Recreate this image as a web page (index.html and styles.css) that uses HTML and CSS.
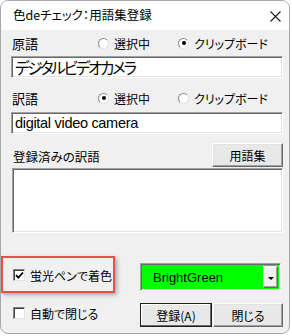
FILE: index.html
```html
<!DOCTYPE html>
<html lang="ja">

<head>
    <meta charset="UTF-8">
    <title>色deチェック：用語集登録</title>
    <link rel="stylesheet" href="styles.css">
</head>

<body>
    <div class="window">
        <div class="titlebar">
            <span class="title">色deチェック：用語集登録</span>
            <svg class="close" width="11" height="11" viewBox="0 0 11 11">
                <path d="M0.5 0.5 L10.5 10.5 M10.5 0.5 L0.5 10.5" stroke="#1a1a1a" stroke-width="1.1" fill="none"/>
            </svg>
        </div>

        <div class="content">
            <!-- 原語 -->
            <div class="row">
                <span class="label">原語</span>
                <span class="radio"><span class="dot"></span>選択中</span>
                <span class="radio checked"><span class="dot"></span>クリップボード</span>
            </div>
            <div class="textbox big">デジタルビデオカメラ</div>

            <!-- 訳語 -->
            <div class="row row-2">
                <span class="label">訳語</span>
                <span class="radio checked"><span class="dot"></span>選択中</span>
                <span class="radio"><span class="dot"></span>クリップボード</span>
            </div>
            <div class="textbox latin">digital video camera</div>

            <!-- 登録済みの訳語 -->
            <div class="list-head">
                <span class="label small">登録済みの訳語</span>
                <span class="button glossary">用語集</span>
            </div>
            <div class="listbox"></div>

            <!-- bottom controls -->
            <div class="bottom">
                <span class="check checked">
                    <span class="box">
                        <svg width="9" height="9" viewBox="0 0 9 9">
                            <path d="M1 4.2 L3.3 6.6 L8 1.5" stroke="#000" stroke-width="1.8" fill="none"/>
                        </svg>
                    </span>蛍光ペンで着色
                </span>
                <div class="combo">
                    <span class="combo-text">BrightGreen</span>
                    <span class="combo-arrow"></span>
                </div>
                <span class="check"><span class="box"></span>自動で閉じる</span>
                <div class="buttons">
                    <span class="button default">登録(A)</span>
                    <span class="button">閉じる</span>
                </div>
            </div>
        </div>

        <div class="highlight"></div>
    </div>
</body>

</html>
```

FILE: styles.css
```css
/* Page */
body {
    margin: 0;
    background: #ffffff;
    font-family: "Noto Sans CJK JP", sans-serif;
    font-feature-settings: "palt";
    color: #000;
}

/* Window frame */
.window {
    position: relative;
    box-sizing: border-box;
    width: 290px;
    height: 334px;
    border: 1px solid #a8a8a8;
    border-radius: 8px;
    background: #f0f0f0;
    overflow: hidden;
}

.titlebar {
    height: 29px;
    background: #ffffff;
    display: flex;
    align-items: center;
    justify-content: space-between;
    padding: 0 8px 0 12px;
}

.title {
    font-size: 12.5px;
    line-height: 1;
}

.close {
    margin-top: 2px;
}

/* Content */
.content {
    padding: 3px 6px 0 10px;
    display: flex;
    flex-direction: column;
}

.row {
    display: grid;
    grid-template-columns: 87px 80px 1fr;
    align-items: center;
    height: 20px;
}

.row-2 {
    margin-top: 10px;
}

.label {
    font-size: 13px;
    padding-left: 1px;
}

.label.small {
    font-size: 12.5px;
}

/* Radio buttons */
.radio {
    display: flex;
    align-items: center;
    gap: 5px;
    font-size: 12px;
}

.dot {
    position: relative;
    box-sizing: border-box;
    width: 11px;
    height: 11px;
    border-radius: 50%;
    background: #ffffff;
    border: 1px solid;
    border-color: #8a8a8a #e2e2e2 #e2e2e2 #8a8a8a;
}

.radio.checked .dot::after {
    content: "";
    position: absolute;
    left: 2.5px;
    top: 2.5px;
    width: 4px;
    height: 4px;
    border-radius: 50%;
    background: #000;
}

/* Sunken boxes */
.textbox,
.listbox {
    box-sizing: border-box;
    background: #ffffff;
    border: 1px solid;
    border-color: #a0a0a0 #ffffff #ffffff #a0a0a0;
    box-shadow: inset 1px 1px 0 #696969, inset -1px -1px 0 #e3e3e3;
}

.textbox {
    height: 22px;
    margin-top: 3px;
    padding: 0 3px;
    display: flex;
    align-items: center;
    white-space: nowrap;
}

.textbox.big {
    font-size: 15.5px;
    letter-spacing: -2.2px;
}

.textbox.latin {
    margin-top: 4px;
    font-family: "Liberation Sans", sans-serif;
    font-size: 14.5px;
    letter-spacing: -0.3px;
}

.list-head {
    margin-top: 9px;
    height: 24px;
    display: flex;
    justify-content: space-between;
    align-items: flex-end;
}

.list-head .label {
    padding-left: 2px;
    margin-bottom: 1px;
}

.listbox {
    margin: 1px 0 0 1px;
    height: 65px;
}

/* Buttons */
.button {
    box-sizing: border-box;
    display: flex;
    align-items: center;
    justify-content: center;
    font-size: 12px;
    background: #e8e8e8;
    border: 1px solid;
    border-color: #ffffff #696969 #696969 #ffffff;
    box-shadow: inset -1px -1px 0 #a0a0a0, inset 1px 1px 0 #e3e3e3;
}

.glossary {
    width: 71px;
    height: 24px;
}

.button.default {
    border-color: #1e1e1e;
    box-shadow: inset -1px -1px 0 #696969, inset 1px 1px 0 #ffffff;
}

/* Bottom section */
.bottom {
    margin-top: 30px;
    display: grid;
    grid-template-columns: 129px 1fr;
    grid-template-rows: 28px 24px;
    row-gap: 12px;
    align-items: center;
}

.check {
    display: flex;
    align-items: center;
    gap: 5px;
    font-size: 12px;
    padding-left: 2px;
    margin-top: -4px;
}

.box {
    box-sizing: border-box;
    width: 12px;
    height: 12px;
    background: #ffffff;
    border: 1px solid;
    border-color: #808080 #e3e3e3 #e3e3e3 #808080;
    box-shadow: inset 1px 1px 0 #404040;
    display: flex;
    align-items: center;
    justify-content: center;
}

.combo {
    box-sizing: border-box;
    width: 141px;
    height: 28px;
    display: flex;
    background: #00ff00;
    border: 1px solid;
    border-color: #a0a0a0 #ffffff #ffffff #a0a0a0;
    box-shadow: inset 1px 1px 0 #696969, inset -1px -1px 0 #e3e3e3;
    padding: 2px 2px 2px 0;
}

.combo-text {
    flex: 1;
    padding-left: 12px;
    font-family: "Liberation Sans", sans-serif;
    font-size: 13px;
    display: flex;
    align-items: center;
}

.combo-arrow {
    position: relative;
    box-sizing: border-box;
    width: 15px;
    background: #f0f0f0;
    border: 1px solid;
    border-color: #f0f0f0 #696969 #696969 #f0f0f0;
    box-shadow: inset -1px -1px 0 #a0a0a0, inset 1px 1px 0 #ffffff;
}

.combo-arrow::after {
    content: "";
    position: absolute;
    left: 4px;
    top: 10px;
    border-left: 3px solid transparent;
    border-right: 3px solid transparent;
    border-top: 3px solid #000;
}

.buttons {
    display: grid;
    grid-template-columns: 72px 70px;
    gap: 1px;
    height: 24px;
}

/* Annotation box drawn over the dialog */
.highlight {
    position: absolute;
    left: 0;
    top: 255px;
    width: 114px;
    height: 37px;
    box-sizing: border-box;
    border: 2px solid #f04b4b;
    box-shadow: 2px 2px 4px rgba(0, 0, 0, 0.3);
}
```
